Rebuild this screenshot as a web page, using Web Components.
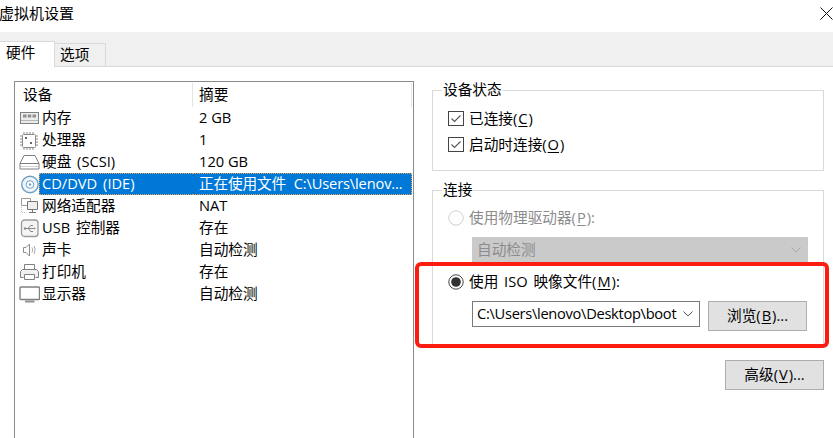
<!DOCTYPE html>
<html lang="zh">
<head>
<meta charset="utf-8">
<title>虚拟机设置</title>
<style>
html, body { margin: 0; padding: 0; background: #fff; }
body { font: 14.67px/20px "Open Sans", "Noto Sans CJK SC", sans-serif; color: #000; }
</style>
</head>
<body>

<vm-dialog>
	<span slot="title">虚拟机设置</span>

	<device-list slot="left">
		<device-row icon="memory"><span slot="name">内存</span><span slot="summary">2 GB</span></device-row>
		<device-row icon="cpu"><span slot="name">处理器</span><span slot="summary">1</span></device-row>
		<device-row icon="disk"><span slot="name">硬盘 (SCSI)</span><span slot="summary">120 GB</span></device-row>
		<device-row icon="cd" selected><span slot="name">CD/DVD (IDE)</span><span slot="summary">正在使用文件 C:\Users\lenov...</span></device-row>
		<device-row icon="net"><span slot="name">网络适配器</span><span slot="summary">NAT</span></device-row>
		<device-row icon="usb"><span slot="name">USB 控制器</span><span slot="summary">存在</span></device-row>
		<device-row icon="sound"><span slot="name">声卡</span><span slot="summary">自动检测</span></device-row>
		<device-row icon="printer"><span slot="name">打印机</span><span slot="summary">存在</span></device-row>
		<device-row icon="display"><span slot="name">显示器</span><span slot="summary">自动检测</span></device-row>
	</device-list>

	<device-panel slot="right"></device-panel>
</vm-dialog>

<script>
const icons = {
	memory: `<rect x="1.500" y="4.500" width="18" height="11" fill="#ececec" stroke="#808080"/>
		<path d="M4 6.500h3.500v3H4zM8.750 6.500h3.500v3h-3.500zM13.500 6.500H17v3h-3.500z" fill="#8f8f8f"/>
		<path d="M2 12.500h17" stroke="#b5b5b5"/>`,
	cpu: `<g transform="translate(0 1)">
		<rect x="3.500" y="3.500" width="13" height="13" rx="1" fill="#fff" stroke="#8a8a8a"/>
		<path d="M1 5h2M1 8h2M1 11h2M1 14h2M17 5h2M17 8h2M17 11h2M17 14h2M5 1v2M8 1v2M11 1v2M14 1v2M5 17v2M8 17v2M11 17v2M14 17v2" stroke="#8a8a8a"/>
		<path d="M6 6h2v2H6zM11 11h2v2h-2z" fill="#666"/></g>`,
	disk: `<path d="M5 3.500h11l4 8v5.500H1v-5.500z" fill="#fff" stroke="#808080"/>
		<path d="M1 11.500h19" stroke="#808080"/>
		<path d="M2 14.500h17" stroke="#d0d0d0"/>`,
	cd: `<circle cx="11" cy="10.500" r="8.300" fill="#eef5fb" stroke="#6d9fc9" stroke-width="1.400"/>
		<circle cx="11" cy="10.500" r="3.800" fill="#fff" stroke="#6d9fc9"/>
		<circle cx="11" cy="10.500" r="1.200" fill="#6d9fc9"/>`,
	net: `<path d="M2.500 2.500h9v7h-9z" fill="#fff" stroke="#9a9a9a"/>
		<path d="M8.500 5.500h10v8h-10z" fill="#efefef" stroke="#777"/>
		<path d="M13.500 13.500v3M10 16.500h7" stroke="#777"/>
		<path d="M2.500 11v5.500h5" stroke="#bbb" stroke-dasharray="1 1" fill="none"/>`,
	usb: `<g transform="translate(1 .5)">
		<rect x="1.500" y="1.500" width="16.500" height="16.500" rx="3" fill="#f4f4f4" stroke="#9a9a9a" stroke-width="1.300"/>
		<path d="M5 10h10M8 10l2.500-3H13M8.500 10l2 3H13" fill="none" stroke="#8a8a8a"/>
		<circle cx="5" cy="10" r="1.200" fill="#8a8a8a"/><path d="M14 9l2 1-2 1z" fill="#8a8a8a"/></g>`,
	sound: `<path d="M4.500 7.500h2.500l3.500-3.500v12L7 12.500H4.500z" fill="#fff" stroke="#8c8c8c"/>
		<path d="M13 7.500c.8 1.500.8 3.500 0 5M15 6c1.300 2.500 1.300 5.500 0 8" fill="none" stroke="#aaa"/>`,
	printer: `<path d="M5.500 2.500h10v5h-10z" fill="#fff" stroke="#808080"/>
		<path d="M4.500 15.500h-3v-6l2-2h14l2 2v6h-3" fill="#f0f0f0" stroke="#808080"/>
		<path d="M5.500 12.500h10v5h-10z" fill="#fff" stroke="#808080"/>`,
	display: `<rect x="1" y="3" width="19.500" height="12.500" rx="1" fill="#fff" stroke="#808080" stroke-width="1.400"/>
		<path d="M6 17.500h9.500" stroke="#909090" stroke-width="2"/>`
}

class VmDialog extends HTMLElement {
	constructor() {
		super()
		this.attachShadow({ mode: 'open' })
		this.shadowRoot.innerHTML = `
		<style>
		:host { display: flex; flex-direction: column; position: relative; width: 833px; height: 438px; overflow: hidden; background: #fff; }
		.title { flex: none; height: 32px; display: flex; align-items: center; justify-content: space-between; font-size: 15px; margin-left: -1px; }
		.title span { position: relative; top: -3px; }
		.title svg { display: block; margin: -6px 0 0; }
		.tabs { flex: none; height: 34px; background: #f0f0f0; border-bottom: 1px solid #d9d9d9; display: flex; align-items: flex-end; }
		.tab { box-sizing: border-box; border: 1px solid #d9d9d9; border-bottom: 0; }
		.tab.on { width: 55px; height: 26px; margin-bottom: -1px; background: #fff; border-left: 0; padding: 0 0 0 6px; }
		.tab.off { width: 51px; height: 23px; border-left: 0; padding: 0 0 0 5px; }
		.body { flex: 1; min-height: 0; display: flex; padding: 14px 10px 0 14px; }
		::slotted([slot=left]) { flex: none; width: 400px; }
		::slotted([slot=right]) { flex: none; width: 392px; margin: 9px 0 0 18px; }
		.mark { position: absolute; left: 415px; top: 262px; width: 406px; height: 78px; border: 4px solid #fb1d10; border-radius: 6px; pointer-events: none; }
		</style>
		<div class="title"><span><slot name="title"></slot></span>
			<svg width="13" height="13" viewBox="0 0 13 13"><path d="M.5.500l12 12M12.500.500l-12 12" stroke="#111" fill="none"/></svg>
		</div>
		<div class="tabs">
			<div class="tab on">硬件</div>
			<div class="tab off">选项</div>
		</div>
		<div class="body">
			<slot name="left"></slot>
			<slot name="right"></slot>
		</div>
		<div class="mark"></div>`
	}
}

class DeviceList extends HTMLElement {
	constructor() {
		super()
		this.attachShadow({ mode: 'open' })
		this.shadowRoot.innerHTML = `
		<style>
		:host { display: block; box-sizing: border-box; height: 400px; border: 1px solid #8a8a8a; padding: 1px; }
		.head { display: grid; grid-template-columns: 177px 1fr; height: 24px; line-height: 22px; }
		.head div { padding-left: 7px; border-right: 1px solid #e5e5e5; }
		.head div + div { padding-left: 6px; }
		</style>
		<div class="head"><div>设备</div><div>摘要</div></div>
		<slot></slot>`
	}
}

class DeviceRow extends HTMLElement {
	constructor() {
		super()
		this.attachShadow({ mode: 'open' })
		const icon = icons[this.getAttribute('icon')] || ''
		this.shadowRoot.innerHTML = `
		<style>
		:host { display: grid; grid-template-columns: 24px 153px 1fr; height: 22px; line-height: 20px; white-space: nowrap; }
		.icon { padding-left: 3px; display: flex; align-items: center; }
		svg { display: block; }
		.name { padding-left: 3px; margin-left: -1px; word-spacing: 2px; }
		.sum { padding-left: 6px; }
		:host([selected]) .name, :host([selected]) .sum { background: #0078d7; color: #fff; line-height: 18px; }
		:host([selected]) .name { border: 1px dotted #e8a25a; border-right: 0; padding-left: 2px; }
		:host([selected]) .sum { border: 1px dotted #e8a25a; border-left: 0; word-spacing: 4px; letter-spacing: -.15px; }
		</style>
		<div class="icon"><svg width="21" height="20" viewBox="0 0 21 20">${icon}</svg></div>
		<div class="name"><slot name="name"></slot></div>
		<div class="sum"><slot name="summary"></slot></div>`
	}
}

class GroupBox extends HTMLElement {
	constructor() {
		super()
		this.attachShadow({ mode: 'open' })
		this.shadowRoot.innerHTML = `
		<style>
		:host { display: block; box-sizing: border-box; position: relative; border: 1px solid #d9d9d9; }
		.label { position: absolute; left: 9px; top: -12px; background: #fff; padding: 0 1px; line-height: 20px; }
		</style>
		<div class="label">${this.getAttribute('label')}</div>
		<slot></slot>`
	}
}

class CheckRow extends HTMLElement {
	constructor() {
		super()
		this.attachShadow({ mode: 'open' })
		this.shadowRoot.innerHTML = `
		<style>
		:host { display: flex; align-items: center; gap: 5px; height: 26px; }
		svg { display: block; flex: none; margin-top: 2px; }
		span { padding-bottom: 1px; }
		</style>
		<svg width="16" height="16" viewBox="0 0 16 16">
			<rect x=".5" y=".5" width="15" height="14" fill="#fff" stroke="#444"/>
			<path d="M3.500 7.500l3 3 6-6" fill="none" stroke="#555" stroke-width="1.100"/>
		</svg>
		<span><slot></slot></span>`
	}
}

class RadioRow extends HTMLElement {
	constructor() {
		super()
		this.attachShadow({ mode: 'open' })
		const on = this.hasAttribute('checked')
		this.shadowRoot.innerHTML = `
		<style>
		:host { display: flex; align-items: center; gap: 5px; height: 26px; }
		:host([disabled]) { color: #8c8c8c; }
		svg { display: block; flex: none; }
		span { padding-bottom: 2px; }
		</style>
		<svg width="16" height="16" viewBox="0 0 16 16">
			<circle cx="8" cy="8" r="7.200" fill="#fff" stroke="${on ? '#444' : '#cfcfcf'}"/>
			${on ? '<circle cx="8" cy="8" r="4.800" fill="#333"/>' : ''}
		</svg>
		<span><slot></slot></span>`
	}
}

class ComboBox extends HTMLElement {
	constructor() {
		super()
		this.attachShadow({ mode: 'open' })
		this.shadowRoot.innerHTML = `
		<style>
		:host { display: flex; align-items: center; justify-content: space-between; box-sizing: border-box; height: 26px; border: 1px solid #7a7a7a; background: #fff; padding: 0 4px; white-space: nowrap; overflow: hidden; }
		:host([disabled]) { background: #cacaca; border-color: #cacaca; color: #8c8c8c; }
		svg { display: block; flex: none; margin-right: 2px; }
		span { padding-bottom: 2px; }
		</style>
		<span><slot></slot></span>
		<svg width="10" height="6" viewBox="0 0 10 6"><path d="M.5.500L5 5 9.500.500" fill="none" stroke="${this.hasAttribute('disabled') ? '#aaa' : '#555'}"/></svg>`
	}
}

class WinButton extends HTMLElement {
	constructor() {
		super()
		this.attachShadow({ mode: 'open' })
		this.shadowRoot.innerHTML = `
		<style>
		:host { display: flex; align-items: center; justify-content: center; box-sizing: border-box; height: 30px; padding-bottom: 2px; background: #e1e1e1; border: 1px solid #adadad; }
		</style>
		<span><slot></slot></span>`
	}
}

class DevicePanel extends HTMLElement {
	constructor() {
		super()
		this.attachShadow({ mode: 'open' })
		this.shadowRoot.innerHTML = `
		<style>
		:host { display: block; }
		u { text-underline-offset: 2px; margin: 0 1px; }
		.state { box-sizing: border-box; height: 81px; padding: 14px 0 0 15px; }
		.conn { box-sizing: border-box; height: 155px; margin-top: 19px; padding: 14px 0 0 15px; }
		.sub { margin: 6px 15px 0 24px; height: 25px; }
		.pick { display: flex; gap: 8px; margin: 6px 15px 0 24px; }
		.pick combo-box { width: 228px; letter-spacing: -.3px; }
		.pick win-button { width: 99px; }
		.more { display: flex; justify-content: flex-end; margin-top: 15px; }
		.more win-button { width: 99px; }
		.iso { margin-top: 7px; word-spacing: 2px; }
		</style>
		<group-box class="state" label="设备状态">
			<check-row>已连接(<u>C</u>)</check-row>
			<check-row>启动时连接(<u>O</u>)</check-row>
		</group-box>
		<group-box class="conn" label="连接">
			<radio-row disabled>使用物理驱动器(<u>P</u>):</radio-row>
			<combo-box class="sub" disabled>自动检测</combo-box>
			<radio-row class="iso" checked>使用 ISO 映像文件(<u>M</u>):</radio-row>
			<div class="pick">
				<combo-box>C:\\Users\\lenovo\\Desktop\\boot</combo-box>
				<win-button>浏览(<u>B</u>)...</win-button>
			</div>
		</group-box>
		<div class="more"><win-button>高级(<u>V</u>)...</win-button></div>`
	}
}

customElements.define('vm-dialog', VmDialog)
customElements.define('device-list', DeviceList)
customElements.define('device-row', DeviceRow)
customElements.define('group-box', GroupBox)
customElements.define('check-row', CheckRow)
customElements.define('radio-row', RadioRow)
customElements.define('combo-box', ComboBox)
customElements.define('win-button', WinButton)
customElements.define('device-panel', DevicePanel)
</script>
</body>
</html>
